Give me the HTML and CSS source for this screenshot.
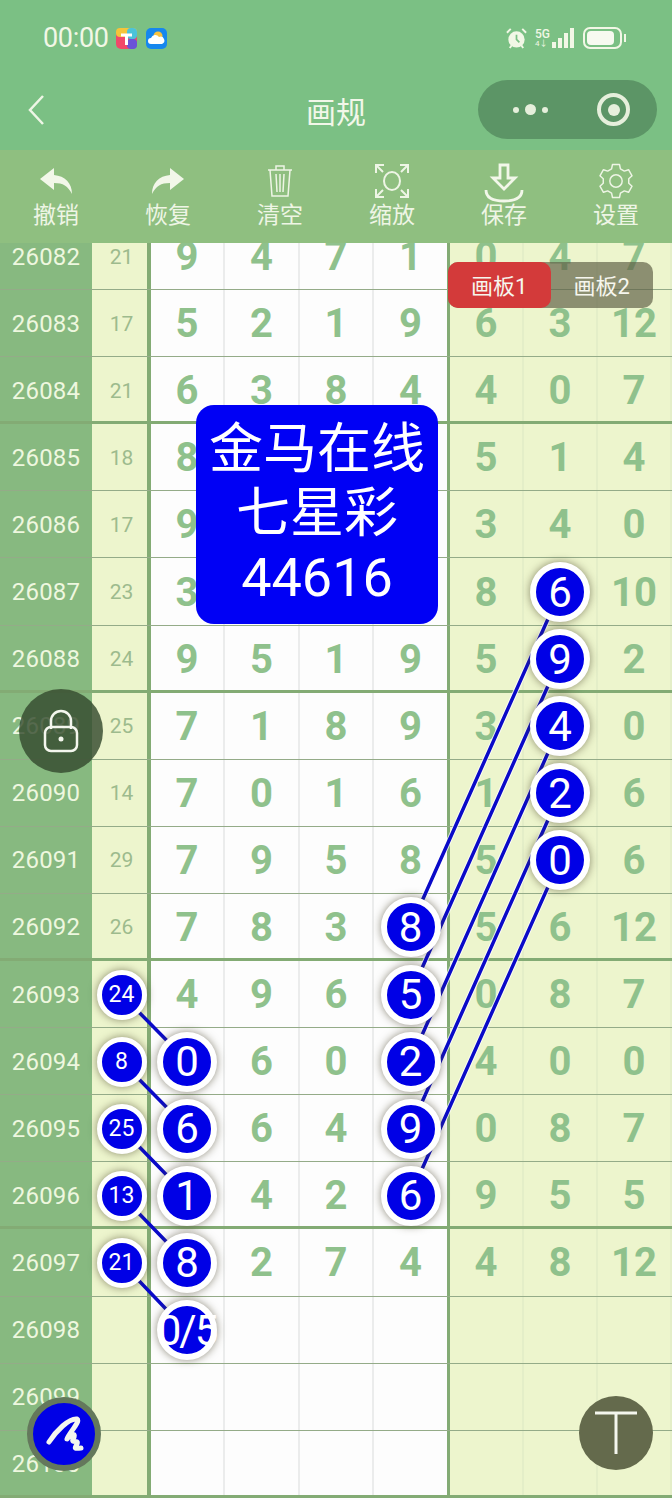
FILE: index.html
```html
<!DOCTYPE html>
<html lang="zh-CN">
<head>
    <meta charset="UTF-8">
    <meta name="viewport" content="width=device-width, initial-scale=1.0">
    <title>画规</title>
    <link rel="stylesheet" href="styles.css">
</head>
<body>
<div class="page">
    <div class="status">
        <span class="time">00:00</span>
        <svg class="app-icon" viewBox="0 0 21 21">
            <rect width="21" height="21" rx="5" fill="#f0486a"/>
            <rect width="21" height="9" rx="4" fill="#f5c53a"/>
            <rect x="11" width="10" height="11" rx="4" fill="#4cc3d9"/>
            <rect x="11" y="11" width="10" height="10" rx="4" fill="#6a53d8"/>
            <path d="M5 7h11M10.500 7v10" stroke="#fff" stroke-width="3"/>
        </svg>
        <svg class="app-icon" viewBox="0 0 21 21">
            <rect width="21" height="21" rx="5" fill="#1687ee"/>
            <circle cx="12" cy="8" r="4.500" fill="#f8c23e"/>
            <path d="M5 16a3 3 0 0 1 0-6 4.500 4.500 0 0 1 8-1 3.500 3.500 0 0 1 3 7z" fill="#fff"/>
        </svg>
        <div class="status-right">
            <svg class="alarm" viewBox="0 0 24 24">
                <circle cx="12" cy="13" r="8.500" fill="#f2f7e6"/>
                <path d="M12 8v5l3 3" stroke="#7bc084" stroke-width="1.800" fill="none"/>
                <path d="M2 6l4-4M22 6l-4-4M5 22l2-3M19 22l-2-3" stroke="#f2f7e6" stroke-width="2"/>
            </svg>
            <span class="net"><b>5G</b><i>4↓</i></span>
            <div class="bars"><i class="b1"></i><i class="b2"></i><i class="b3"></i><i class="b4"></i></div>
            <div class="battery"><i></i></div>
        </div>
    </div>

    <div class="nav">
        <svg class="back" viewBox="0 0 16 30"><path d="M15 1L2 15l13 14" fill="none" stroke="#eef6e6" stroke-width="2.500"/></svg>
        <div class="title">画规</div>
        <div class="capsule">
            <div class="dots"><i></i><i class="mid"></i><i></i></div>
            <div class="target"><i></i></div>
        </div>
    </div>

    <div class="toolbar">
        <div class="tool">
            <svg class="tool-icon" viewBox="0 0 36 36"><path d="M16 5L2 16l14 11v-7c9 0 14 3 18 11 0-11-7-18-18-19z" fill="#f2f7e9"/></svg>
            <span>撤销</span>
        </div>
        <div class="tool">
            <svg class="tool-icon flip" viewBox="0 0 36 36"><path d="M16 5L2 16l14 11v-7c9 0 14 3 18 11 0-11-7-18-18-19z" fill="#f2f7e9"/></svg>
            <span>恢复</span>
        </div>
        <div class="tool">
            <svg class="tool-icon" viewBox="0 0 36 36" fill="none" stroke="#eef5e5" stroke-width="1.500"><path d="M6 7h24M14 7V3h8v4M8 7l2 26h16l2-26M14 11l1 18M18 11v18M22 11l-1 18"/></svg>
            <span>清空</span>
        </div>
        <div class="tool">
            <svg class="tool-icon" viewBox="0 0 36 36" fill="none" stroke="#eef5e5" stroke-width="2"><path d="M2 10V2h8M26 2h8v8M2 26v8h8M34 26v8h-8M2 2l7 7M34 2l-7 7M2 34l7-7M34 34l-7-7"/><ellipse cx="18" cy="18" rx="8" ry="9"/></svg>
            <span>缩放</span>
        </div>
        <div class="tool">
            <svg class="tool-icon save" viewBox="0 0 40 40" fill="none" stroke="#f2f7e9" stroke-width="2.800"><path d="M16 2h8v13h7L20 26 9 15h7zM2 27c0 8 8 11 18 11s18-3 18-11"/></svg>
            <span>保存</span>
        </div>
        <div class="tool">
            <svg class="tool-icon" viewBox="0 0 32 32" fill="none" stroke="#eef5e5" stroke-width="1.300" stroke-linejoin="round"><polygon points="12.880,1.330 19.120,1.330 19.930,5.190 23.390,7.190 27.150,5.960 30.270,11.360 27.330,14 27.330,18 30.270,20.640 27.150,26.040 23.390,24.810 19.930,26.810 19.120,30.670 12.880,30.670 12.070,26.810 8.610,24.810 4.850,26.040 1.730,20.640 4.670,18 4.670,14 1.730,11.360 4.850,5.960 8.610,7.190 12.070,5.190"/><circle cx="16" cy="16" r="5.500"/></svg>
            <span>设置</span>
        </div>
    </div>

    <div class="board">
        <div class="sheet">
            <div class="row"><div class="no">26082</div><div class="sum">21</div><div class="num">9</div><div class="num">4</div><div class="num">7</div><div class="num">1</div><div class="num alt">0</div><div class="num alt">4</div><div class="num alt">7</div></div>
            <div class="row"><div class="no">26083</div><div class="sum">17</div><div class="num">5</div><div class="num">2</div><div class="num">1</div><div class="num">9</div><div class="num alt">6</div><div class="num alt">3</div><div class="num alt">12</div></div>
            <div class="row thick"><div class="no">26084</div><div class="sum">21</div><div class="num">6</div><div class="num">3</div><div class="num">8</div><div class="num">4</div><div class="num alt">4</div><div class="num alt">0</div><div class="num alt">7</div></div>
            <div class="row"><div class="no">26085</div><div class="sum">18</div><div class="num">8</div><div class="num"></div><div class="num"></div><div class="num"></div><div class="num alt">5</div><div class="num alt">1</div><div class="num alt">4</div></div>
            <div class="row"><div class="no">26086</div><div class="sum">17</div><div class="num">9</div><div class="num"></div><div class="num"></div><div class="num"></div><div class="num alt">3</div><div class="num alt">4</div><div class="num alt">0</div></div>
            <div class="row"><div class="no">26087</div><div class="sum">23</div><div class="num">3</div><div class="num"></div><div class="num"></div><div class="num"></div><div class="num alt">8</div><div class="num alt"><span class="ball">6</span></div><div class="num alt">10</div></div>
            <div class="row thick"><div class="no">26088</div><div class="sum">24</div><div class="num">9</div><div class="num">5</div><div class="num">1</div><div class="num">9</div><div class="num alt">5</div><div class="num alt"><span class="ball">9</span></div><div class="num alt">2</div></div>
            <div class="row"><div class="no">26089</div><div class="sum">25</div><div class="num">7</div><div class="num">1</div><div class="num">8</div><div class="num">9</div><div class="num alt">3</div><div class="num alt"><span class="ball">4</span></div><div class="num alt">0</div></div>
            <div class="row"><div class="no">26090</div><div class="sum">14</div><div class="num">7</div><div class="num">0</div><div class="num">1</div><div class="num">6</div><div class="num alt">1</div><div class="num alt"><span class="ball">2</span></div><div class="num alt">6</div></div>
            <div class="row"><div class="no">26091</div><div class="sum">29</div><div class="num">7</div><div class="num">9</div><div class="num">5</div><div class="num">8</div><div class="num alt">5</div><div class="num alt"><span class="ball">0</span></div><div class="num alt">6</div></div>
            <div class="row thick"><div class="no">26092</div><div class="sum">26</div><div class="num">7</div><div class="num">8</div><div class="num">3</div><div class="num"><span class="ball">8</span></div><div class="num alt">5</div><div class="num alt">6</div><div class="num alt">12</div></div>
            <div class="row"><div class="no">26093</div><div class="sum"><span class="ball small">24</span></div><div class="num">4</div><div class="num">9</div><div class="num">6</div><div class="num"><span class="ball">5</span></div><div class="num alt">0</div><div class="num alt">8</div><div class="num alt">7</div></div>
            <div class="row"><div class="no">26094</div><div class="sum"><span class="ball small">8</span></div><div class="num"><span class="ball">0</span></div><div class="num">6</div><div class="num">0</div><div class="num"><span class="ball">2</span></div><div class="num alt">4</div><div class="num alt">0</div><div class="num alt">0</div></div>
            <div class="row"><div class="no">26095</div><div class="sum"><span class="ball small">25</span></div><div class="num"><span class="ball">6</span></div><div class="num">6</div><div class="num">4</div><div class="num"><span class="ball">9</span></div><div class="num alt">0</div><div class="num alt">8</div><div class="num alt">7</div></div>
            <div class="row thick"><div class="no">26096</div><div class="sum"><span class="ball small">13</span></div><div class="num"><span class="ball">1</span></div><div class="num">4</div><div class="num">2</div><div class="num"><span class="ball">6</span></div><div class="num alt">9</div><div class="num alt">5</div><div class="num alt">5</div></div>
            <div class="row"><div class="no">26097</div><div class="sum"><span class="ball small">21</span></div><div class="num"><span class="ball">8</span></div><div class="num">2</div><div class="num">7</div><div class="num">4</div><div class="num alt">4</div><div class="num alt">8</div><div class="num alt">12</div></div>
            <div class="row"><div class="no">26098</div><div class="sum"></div><div class="num"><span class="ball tight">0/5</span></div><div class="num"></div><div class="num"></div><div class="num"></div><div class="num alt"></div><div class="num alt"></div><div class="num alt"></div></div>
            <div class="row"><div class="no">26099</div><div class="sum"></div><div class="num"></div><div class="num"></div><div class="num"></div><div class="num"></div><div class="num alt"></div><div class="num alt"></div><div class="num alt"></div></div>
            <div class="row thick"><div class="no">26100</div><div class="sum"></div><div class="num"></div><div class="num"></div><div class="num"></div><div class="num"></div><div class="num alt"></div><div class="num alt"></div><div class="num alt"></div></div>
        </div>

        <!-- links between picked numbers, viewBox uses page coordinates -->
        <svg class="links" viewBox="0 243 672 1257">
            <g class="halo">
                <path d="M410 928L560 592M410 995L560 659M410 1062L560 726M410 1129L560 793M410 1196L560 860"/>
            </g>
            <g class="line">
                <path d="M410 928L560 592M410 995L560 659M410 1062L560 726M410 1129L560 793M410 1196L560 860"/>
                <path d="M122 995L187 1061M122 1062L187 1128M122 1129L187 1196M122 1196L187 1263M122 1263L187 1331"/>
            </g>
        </svg>
    </div>

    <div class="notice">金马在线<br>七星彩<br><span class="notice-no">44616</span></div>

    <div class="tabs">
        <div class="tab on">画板1</div>
        <div class="tab">画板2</div>
    </div>

    <div class="fab lock">
        <svg viewBox="0 0 36 44" fill="none" stroke="#f4f6ee" stroke-width="2.500"><path d="M8 20v-8a10 10 0 0 1 20 0v8"/><rect x="2" y="18" width="32" height="24" rx="6"/><circle cx="18" cy="30" r="2.500" fill="#f4f6ee" stroke="none"/></svg>
    </div>
    <div class="fab pen">
        <svg viewBox="0 0 62 62" fill="none" stroke="#f4f6ee" stroke-width="5" stroke-linecap="round" stroke-linejoin="round"><path d="M16 39C23 28 36 15 44 16C48 18 36 30 34 36C38 30 44 30 40 36C38 41 46 36 44 41C42 45 40 46 48 45"/></svg>
    </div>
    <div class="fab text-btn">
        <svg viewBox="0 0 44 44" stroke="#f4f6ee" stroke-width="3"><path d="M1 2h42M22 2v41"/></svg>
    </div>
</div>
</body>
</html>
```

FILE: styles.css
```css
* {
    box-sizing: border-box;
}

body {
    margin: 0;
    background: #fff;
    font-family: Roboto, "Noto Sans CJK SC", sans-serif;
}

.page {
    position: relative;
    width: 672px;
    height: 1500px;
    overflow: hidden;
}

/* Status bar */
.status {
    display: flex;
    align-items: center;
    height: 78px;
    padding: 0 50px 2px 43px;
    background: #7bc084;
    color: #f2f7e6;
}

.time {
    font-size: 27px;
    letter-spacing: -0.3px;
    margin-right: 7px;
}

.app-icon {
    width: 21px;
    height: 21px;
    margin-right: 9px;
}

.status-right {
    display: flex;
    align-items: center;
    margin-left: auto;
}

.alarm {
    width: 23px;
    height: 23px;
    margin-right: 7px;
}

.net {
    display: flex;
    flex-direction: column;
    font-size: 12px;
    line-height: 12px;
    width: 16px;
    margin-right: 1px;
}

.net b {
    font-weight: 500;
}

.net i {
    font-style: normal;
    font-size: 8px;
    line-height: 8px;
}

.bars {
    display: flex;
    align-items: flex-end;
    gap: 2px;
    height: 20px;
    margin-right: 9px;
}

.bars i {
    width: 4px;
    background: #f2f7e6;
}

.bars .b1 { height: 6px; }
.bars .b2 { height: 10px; }
.bars .b3 { height: 15px; }
.bars .b4 { height: 20px; }

.battery {
    position: relative;
    width: 39px;
    height: 22px;
    padding: 2px;
    border: 2px solid #f2f7e6;
    border-radius: 7px;
}

.battery i {
    display: block;
    width: 27px;
    height: 100%;
    background: #f7faf0;
    border-radius: 4px;
}

.battery::after {
    content: "";
    position: absolute;
    right: -6px;
    top: 5px;
    width: 2px;
    height: 8px;
    background: #f2f7e6;
}

/* Title bar */
.nav {
    position: relative;
    display: flex;
    align-items: center;
    justify-content: center;
    height: 72px;
    padding-bottom: 9px;
    background: #7bc084;
}

.back {
    position: absolute;
    left: 28px;
    top: 17px;
    width: 16px;
    height: 30px;
}

.title {
    font-size: 30px;
    color: #f2f7e9;
}

.capsule {
    position: absolute;
    left: 478px;
    top: 2px;
    display: flex;
    align-items: center;
    width: 179px;
    height: 59px;
    background: #5c9566;
    border-radius: 30px;
}

.dots {
    display: flex;
    align-items: center;
    justify-content: center;
    gap: 6px;
    width: 100px;
    padding-left: 4px;
}

.dots i {
    width: 6px;
    height: 6px;
    border-radius: 50%;
    background: #e6efdc;
}

.dots .mid {
    width: 11px;
    height: 11px;
}

.target {
    display: flex;
    align-items: center;
    justify-content: center;
    width: 33px;
    height: 33px;
    margin-left: 19px;
    border: 4px solid #e6efdc;
    border-radius: 50%;
}

.target i {
    width: 12px;
    height: 12px;
    border-radius: 50%;
    background: #e6efdc;
}

/* Tools */
.toolbar {
    display: grid;
    grid-template-columns: repeat(6, 112px);
    height: 93px;
    background: #8fbf80;
}

.tool {
    display: flex;
    flex-direction: column;
    align-items: center;
    padding-top: 13px;
    font-size: 23px;
    line-height: 30px;
    color: #eef5e5;
}

.tool-icon {
    width: 36px;
    height: 36px;
    margin-bottom: 2px;
}

.tool-icon.save {
    width: 40px;
    height: 40px;
    margin-bottom: -2px;
}

.flip {
    transform: scaleX(-1);
}

/* Number sheet */
.board {
    position: relative;
    height: 1257px;
    overflow: hidden;
    background: #fdfdfd;
}

.sheet {
    margin-top: -20px;
}

.row {
    display: grid;
    grid-template-columns: 92px 59px 74px 75px 74px 76px 74px 74px 74px;
    height: 67.1px;
    border-bottom: 1px solid #94ab88;
}

.row.thick {
    border-bottom: 3px solid #83ab74;
}

.no,
.sum,
.num {
    display: flex;
    align-items: center;
    justify-content: center;
    padding-top: 1px;
}

.thick .no,
.thick .sum,
.thick .num {
    padding-top: 3px;
}

.no {
    font-size: 24px;
    color: #eef7df;
    background: #87b980;
    letter-spacing: 0.2px;
}

.sum {
    padding-left: 4px;
    font-size: 21px;
    color: #9dbb8d;
    background: #edf5cd;
    border-right: 4px solid #83ab74;
}

.num {
    font-size: 40px;
    font-weight: 700;
    color: #8fc18c;
    background: #fdfdfd;
    border-right: 2px solid #ebecec;
}

.num:nth-child(6) {
    border-right: 3px solid #83ab74;
}

.num.alt {
    background: #edf5cd;
    border-right: 2px solid #e4eec8;
}

.ball {
    position: relative;
    z-index: 2;
    display: flex;
    flex: none;
    align-items: center;
    justify-content: center;
    width: 60px;
    height: 60px;
    font-size: 42px;
    font-weight: 400;
    white-space: nowrap;
    color: #fff;
    background: #0000e6;
    border: 6px solid #fff;
    border-radius: 50%;
    box-shadow: 0 0 9px rgba(70, 65, 40, 0.6);
}

.ball.small {
    width: 50px;
    height: 50px;
    font-size: 23px;
    border-width: 5px;
}

.ball.tight {
    letter-spacing: -2px;
}

.links {
    position: absolute;
    left: 0;
    top: 0;
    z-index: 1;
    width: 672px;
    height: 1257px;
}

.halo path {
    fill: none;
    stroke: rgba(255, 255, 255, 0.75);
    stroke-width: 5.500;
}

.line path {
    fill: none;
    stroke: #0a0ac8;
    stroke-width: 3.500;
}

/* Things floating over the sheet */
.notice {
    position: absolute;
    left: 196px;
    top: 405px;
    z-index: 3;
    width: 242px;
    height: 219px;
    padding-top: 13px;
    font-size: 54px;
    line-height: 64px;
    text-align: center;
    color: #fff;
    background: #0000f5;
    border-radius: 18px;
}

.notice-no {
    font-size: 54px;
}

.tabs {
    position: absolute;
    left: 448px;
    top: 262px;
    z-index: 3;
    display: flex;
    width: 205px;
    height: 46px;
    font-size: 22px;
    color: #f6f6ee;
    background: rgba(95, 95, 70, 0.68);
    border-radius: 10px;
}

.tab {
    display: flex;
    flex: 1;
    align-items: center;
    justify-content: center;
    padding-bottom: 3px;
    border-radius: 10px;
}

.tab.on {
    background: #d33a3a;
}

.fab {
    position: absolute;
    z-index: 3;
    display: flex;
    align-items: center;
    justify-content: center;
    border-radius: 50%;
}

.lock {
    left: 19px;
    top: 689px;
    width: 84px;
    height: 84px;
    background: rgba(52, 74, 46, 0.82);
}

.lock svg {
    width: 36px;
    height: 44px;
}

.pen {
    left: 27px;
    top: 1397px;
    width: 74px;
    height: 74px;
    background: #0000e6;
    border: 6px solid #64785c;
}

.pen svg {
    width: 62px;
    height: 62px;
}

.text-btn {
    left: 579px;
    top: 1396px;
    width: 74px;
    height: 74px;
    background: #646a4c;
}

.text-btn svg {
    width: 44px;
    height: 44px;
}
```
